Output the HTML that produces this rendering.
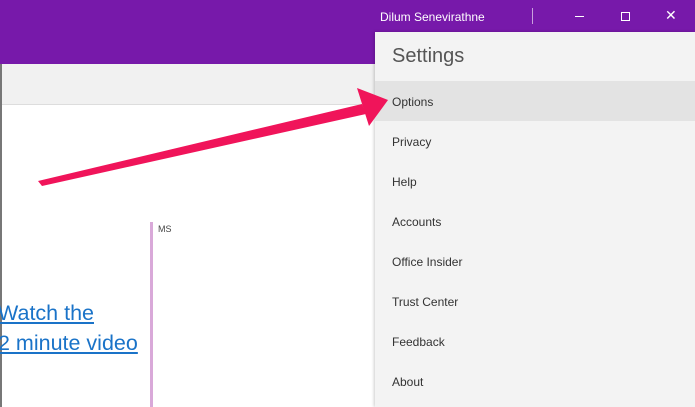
<html><body style="margin:0;width:695px;height:407px;overflow:hidden;position:relative;background:#fff;font-family:'Liberation Sans',sans-serif">
<div style="position:absolute;left:0;top:0;width:695px;height:33px;background:#7719aa"></div>
<div style="position:absolute;left:0;top:33px;width:375px;height:31px;background:#7719aa"></div>
<div style="position:absolute;left:0;top:64px;width:375px;height:40px;background:#f1f1f1;border-bottom:1px solid #ddd"></div>
<div style="position:absolute;left:0;top:64px;width:2px;height:343px;background:#777"></div>
<div style="position:absolute;left:380px;top:10px;color:#fff;font-size:12px">Dilum Senevirathne</div>
<div style="position:absolute;left:532px;top:8px;width:1px;height:16px;background:#c9a0dd"></div>
<div style="position:absolute;left:575px;top:16px;width:9px;height:1px;background:#fff"></div>
<div style="position:absolute;left:621px;top:12px;width:7px;height:7px;border:1px solid #fff"></div>
<div style="position:absolute;left:665px;top:7px;color:#fff;font-size:14px">✕</div>
<div style="position:absolute;left:150px;top:222px;width:3px;height:185px;background:#d9a9d9"></div>
<div style="position:absolute;left:158px;top:224px;font-size:9px;color:#444">MS</div>
<div style="position:absolute;left:-2px;top:298px;font-size:21.5px;color:#1a73c8;text-decoration:underline;line-height:30px">Watch the<br>2 minute video</div>
<div style="position:absolute;left:375px;top:32px;width:320px;height:375px;background:#f3f3f3;box-shadow:-1px 0 3px rgba(0,0,0,.2)">
<div style="position:absolute;left:17px;top:13px;font-size:20px;color:#555">Settings</div>
<div style="position:absolute;left:0;top:49px;width:320px;height:40px;background:#e3e3e3"></div>
<div style="position:absolute;left:17px;top:62px;font-size:12px;color:#333;line-height:40px;margin-top:-12px">Options<br>Privacy<br>Help<br>Accounts<br>Office Insider<br>Trust Center<br>Feedback<br>About</div>
</div>
<svg style="position:absolute;left:0;top:0" width="695" height="407"><polygon points="38,181 362,104 366,114 42,186" fill="#f0145a"/><polygon points="388,100 357,88 369,126" fill="#f0145a"/></svg>
</body></html>
